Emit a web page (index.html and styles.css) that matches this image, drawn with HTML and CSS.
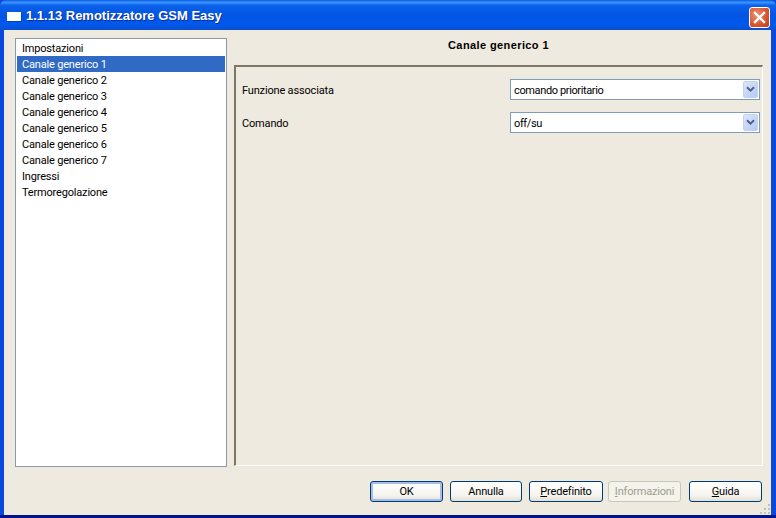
FILE: index.html
```html
<!DOCTYPE html>
<html lang="it">
<head>
<meta charset="utf-8">
<title>1.1.13 Remotizzatore GSM Easy</title>
<link rel="stylesheet" href="styles.css">
</head>
<body>
<div class="window">
  <header class="titlebar">
    <svg class="app-icon" width="15" height="10" viewBox="0 0 15 10"><rect x="0" y="0" width="14" height="9" fill="#fff"/><rect x="14" y="1" width="1" height="9" fill="#0a3fb0"/><rect x="1" y="9" width="14" height="1" fill="#0a3fb0"/></svg>
    <span class="title">1.1.13 Remotizzatore GSM Easy</span>
    <div class="close"><svg width="21" height="21" viewBox="0 0 21 21"><path d="M6 6l9 9M15 6l-9 9" stroke="#fff" stroke-width="2.4" stroke-linecap="square" fill="none"/></svg></div>
  </header>
  <div class="client">
    <div class="main">
      <ul class="tree">
        <li>Impostazioni</li>
        <li class="selected">Canale generico 1</li>
        <li>Canale generico 2</li>
        <li>Canale generico 3</li>
        <li>Canale generico 4</li>
        <li>Canale generico 5</li>
        <li>Canale generico 6</li>
        <li>Canale generico 7</li>
        <li>Ingressi</li>
        <li>Termoregolazione</li>
      </ul>
      <section class="panel">
        <h1 class="heading">Canale generico 1</h1>
        <div class="group">
          <div class="row">
            <span class="label">Funzione associata</span>
            <div class="combo"><span class="value">comando prioritario</span><span class="arrow"><svg width="9" height="7" viewBox="0 0 9 7"><path d="M1 1.2l3.5 3.5L8 1.2" stroke="#4d6185" stroke-width="2" fill="none"/></svg></span></div>
          </div>
          <div class="row">
            <span class="label">Comando</span>
            <div class="combo"><span class="value">off/su</span><span class="arrow"><svg width="9" height="7" viewBox="0 0 9 7"><path d="M1 1.2l3.5 3.5L8 1.2" stroke="#4d6185" stroke-width="2" fill="none"/></svg></span></div>
          </div>
        </div>
      </section>
    </div>
    <footer class="buttons">
      <button class="btn default">OK</button>
      <button class="btn w72">Annulla</button>
      <button class="btn w74"><u>P</u>redefinito</button>
      <button class="btn disabled" disabled><u>I</u>nformazioni</button>
      <button class="btn guida"><u>G</u>uida</button>
    </footer>
    <svg class="grip" width="12" height="12" viewBox="0 0 12 12" fill="#c5c2b2"><rect x="9" y="1" width="2" height="2"/><rect x="5" y="5" width="2" height="2"/><rect x="9" y="5" width="2" height="2"/><rect x="1" y="9" width="2" height="2"/><rect x="5" y="9" width="2" height="2"/><rect x="9" y="9" width="2" height="2"/></svg>
  </div>
</div>
</body>
</html>
```
FILE: styles.css
```css
* { box-sizing: border-box; }
html, body { margin: 0; padding: 0; }
body { width: 776px; height: 518px; overflow: hidden; font-family: Roboto, "Liberation Sans", sans-serif; font-size: 11px; color: #000; }
.window { width: 776px; height: 518px; display: flex; flex-direction: column; background: linear-gradient(180deg, #0a48e0 0, #0a48e0 99.4%, #00138c 99.4%); }
.titlebar { height: 30px; flex: none; display: flex; align-items: center; padding: 0 6px 0 7px; color: #fff; border-radius: 6px 6px 0 0;
  background: linear-gradient(180deg, #0a5ce0 0%, #3a93ff 8%, #0a62ea 18%, #0355e2 50%, #0058ee 80%, #0a4fd0 100%); }
.app-icon { flex: none; margin-top: 3px; }
.title { margin-left: 4px; padding-top: 1px; font-size: 13px; font-weight: bold; font-family: "Liberation Sans", sans-serif; text-shadow: 1px 1px 0 #0f2f90; }
.close { margin-left: auto; margin-top: 5px; width: 21px; height: 21px; border: 1px solid #fff; border-radius: 3px; background: radial-gradient(circle at 35% 35%, #ee9070, #d8532d 60%, #c03a1a); }
.close svg { display: block; margin: -1px; }
.client { position: relative; flex: 1; margin: 0 5px 3px 4px; background: #eeeadf; display: flex; flex-direction: column; }
.main { height: 437px; flex: none; display: flex; padding-top: 8px; }
.tree { list-style: none; margin: 0 0 0 11px; padding: 1px; width: 212px; height: 429px; background: #fff; border: 1px solid #8a9aa6; }
.tree li { height: 16px; line-height: 18px; padding-left: 5px; letter-spacing: -.18px; }
.tree .selected { background: #316ac5; color: #fff; }
.panel { margin-left: 7px; width: 529px; display: flex; flex-direction: column; }
.heading { margin: 0; height: 27px; font-family: "Liberation Sans", sans-serif; font-size: 11px; line-height: 14px; font-weight: bold; letter-spacing: .4px; text-align: center; }
.group { height: 401px; border-top: 2px solid #7e7768; border-left: 2px solid #7e7768; border-right: 1px solid #fff; border-bottom: 1px solid #fff; padding-top: 12px; }
.row { height: 33px; display: flex; align-items: flex-start; padding-left: 6px; }
.label { width: 268px; line-height: 23px; letter-spacing: -.17px; }
.combo { width: 250px; height: 21px; display: flex; border: 1px solid #7f9db9; background: #fff; align-items: center; justify-content: space-between; padding: 1px; }
.value { padding: 1px 0 0 2px; letter-spacing: -.37px; }
.arrow { width: 15px; height: 17px; display: flex; align-items: center; justify-content: center; border-radius: 2px; background: linear-gradient(135deg, #dce6fb, #b4c8f5); border: 1px solid #c3d2f5; }
.buttons { position: relative; flex: 1; }
.btn { position: absolute; top: 14px; height: 21px; width: 73px; padding: 0; font: 11px Roboto, "Liberation Sans", sans-serif; letter-spacing: -.2px; color: #000; border: 1px solid #003c74; border-radius: 3px; background: linear-gradient(180deg, #fff 0%, #f5f4ee 70%, #e3e0d3 100%); }
.default { left: 366px; box-shadow: inset 0 0 0 2px #a6bde8; }
.w72 { left: 446px; width: 72px; }
.w74 { left: 525px; width: 74px; }
.disabled { left: 604px; color: #a19d8d; border-color: #c9c7ba; background: #f4f3ec; }
.guida { left: 685px; }
.grip { position: absolute; right: 0; bottom: 0; }
```
